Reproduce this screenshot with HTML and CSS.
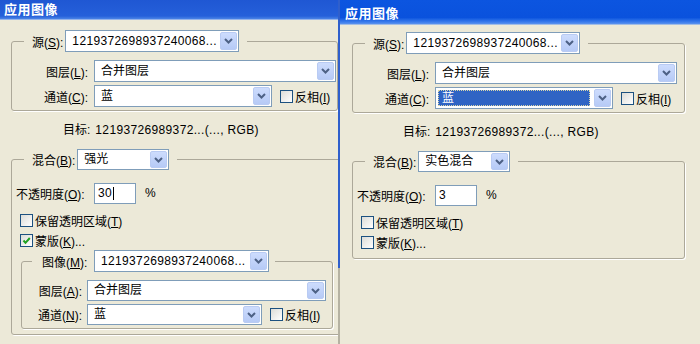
FILE: index.html
```html
<!DOCTYPE html>
<html lang="zh">
<head>
<meta charset="utf-8">
<title>应用图像</title>
<link rel="stylesheet" href="styles.css">
</head>
<body>
<div class="screen">
  <section class="dialog dlg-left">
    <header class="titlebar tb-left">应用图像</header>
    <fieldset class="group g1 gl">
      <legend class="legend"><div class="lg"><span class="lg-lbl">源(<u>S</u>):</span><div class="combo w174"><span class="val num">1219372698937240068...</span><span class="arrow"><svg viewBox="0 0 9 6"><path d="M1 1 L4.5 4.5 L8 1"/></svg></span></div></div></legend>
      <div class="row mt8"><span class="col">图层(<u>L</u>):</span><div class="combo w242"><span class="val">合并图层</span><span class="arrow"><svg viewBox="0 0 9 6"><path d="M1 1 L4.5 4.5 L8 1"/></svg></span></div></div>
      <div class="row mt3"><span class="col">通道(<u>C</u>):</span><div class="combo w178"><span class="val">蓝</span><span class="arrow"><svg viewBox="0 0 9 6"><path d="M1 1 L4.5 4.5 L8 1"/></svg></span></div><span class="check ml8"></span><span class="ctext">反相(<u>I</u>)</span></div>
    </fieldset>
    <div class="target"><span>目标:</span><span class="num tval">12193726989372...(..., RGB)</span></div>
    <fieldset class="group g2 gl2">
      <legend class="legend"><div class="lg"><span class="lg-lbl">混合(<u>B</u>):</span><div class="combo w92 h21"><span class="val">强光</span><span class="arrow"><svg viewBox="0 0 9 6"><path d="M1 1 L4.5 4.5 L8 1"/></svg></span></div></div></legend>
      <div class="row oprow"><span class="op-label">不透明度(<u>O</u>):</span><div class="input"><span class="num">30</span><span class="caret"></span></div><span class="pct">%</span></div>
      <div class="cbrow first"><span class="check"></span><span class="ctext">保留透明区域(<u>T</u>)</span></div>
      <div class="cbrow"><span class="check on"><svg viewBox="0 0 11 11"><path d="M2.5 5.5 L4.5 7.8 L8.8 3"/></svg></span><span class="ctext">蒙版(<u>K</u>)...</span></div>
      <fieldset class="group inner">
        <legend class="legend il"><div class="lg"><span class="lg-lbl w52">图像(<u>M</u>):</span><div class="combo w175"><span class="val num">1219372698937240068...</span><span class="arrow"><svg viewBox="0 0 9 6"><path d="M1 1 L4.5 4.5 L8 1"/></svg></span></div></div></legend>
        <div class="row mt8 h21r"><span class="col c60">图层(<u>A</u>):</span><div class="combo w239 h21"><span class="val">合并图层</span><span class="arrow"><svg viewBox="0 0 9 6"><path d="M1 1 L4.5 4.5 L8 1"/></svg></span></div></div>
        <div class="row mt3 h21r"><span class="col c60">通道(<u>N</u>):</span><div class="combo w175 h21"><span class="val">蓝</span><span class="arrow"><svg viewBox="0 0 9 6"><path d="M1 1 L4.5 4.5 L8 1"/></svg></span></div><span class="check ml8"></span><span class="ctext">反相(<u>I</u>)</span></div>
      </fieldset>
    </fieldset>
  </section>
  <div class="frame"></div>
  <section class="dialog dlg-right">
    <header class="titlebar tb-right">应用图像</header>
    <fieldset class="group g1 gr">
      <legend class="legend"><div class="lg"><span class="lg-lbl">源(<u>S</u>):</span><div class="combo w174"><span class="val num">1219372698937240068...</span><span class="arrow"><svg viewBox="0 0 9 6"><path d="M1 1 L4.5 4.5 L8 1"/></svg></span></div></div></legend>
      <div class="row mt8"><span class="col">图层(<u>L</u>):</span><div class="combo w242"><span class="val">合并图层</span><span class="arrow"><svg viewBox="0 0 9 6"><path d="M1 1 L4.5 4.5 L8 1"/></svg></span></div></div>
      <div class="row mt3"><span class="col">通道(<u>C</u>):</span><div class="combo w178 sel"><span class="val">蓝</span><span class="arrow"><svg viewBox="0 0 9 6"><path d="M1 1 L4.5 4.5 L8 1"/></svg></span></div><span class="check ml8"></span><span class="ctext">反相(<u>I</u>)</span></div>
    </fieldset>
    <div class="target"><span>目标:</span><span class="num tval">12193726989372...(..., RGB)</span></div>
    <fieldset class="group g2 gr2">
      <legend class="legend"><div class="lg"><span class="lg-lbl">混合(<u>B</u>):</span><div class="combo w92 h21"><span class="val">实色混合</span><span class="arrow"><svg viewBox="0 0 9 6"><path d="M1 1 L4.5 4.5 L8 1"/></svg></span></div></div></legend>
      <div class="row oprow"><span class="op-label">不透明度(<u>O</u>):</span><div class="input"><span class="num">3</span></div><span class="pct">%</span></div>
      <div class="cbrow first"><span class="check"></span><span class="ctext">保留透明区域(<u>T</u>)</span></div>
      <div class="cbrow"><span class="check"></span><span class="ctext">蒙版(<u>K</u>)...</span></div>
    </fieldset>
  </section>
</div>
</body>
</html>
```
FILE: styles.css
```css
* { box-sizing: border-box; }
html, body { margin: 0; padding: 0; }
body {
  width: 700px;
  height: 344px;
  overflow: hidden;
  background: #ece9d8;
  font-family: "Liberation Sans", "Noto Sans CJK SC", sans-serif;
  font-size: 12px;
  color: #000;
}
u { text-decoration: underline; text-underline-offset: 1px; }
.screen { display: flex; height: 344px; }
.dialog { background: #ece9d8; height: 344px; overflow: hidden; }
.dlg-left { width: 338px; flex: none; }
.frame { width: 2px; flex: none; background: linear-gradient(#2f5fcc 0, #2f5fcc 268px, #b5b2a2 268px); }
.dlg-right { flex: 1; min-width: 0; }

.titlebar {
  color: #fff;
  font-family: "Noto Sans CJK SC", sans-serif;
  font-weight: bold;
  font-size: 13px;
  line-height: 15px;
  letter-spacing: 0.5px;
}
.tb-left {
  height: 20px;
  padding: 1px 0 0 4px;
  background: linear-gradient(#1f57d3, #2560da 80%, #4b84e6 95%, #dfe3ee 100%);
}
.tb-right {
  height: 25px;
  padding: 5px 0 0 5px;
  background: linear-gradient(#0c55e0, #0a52dd 70%, #3a7cec 88%, #5b93ee 96%, #e7e6dc 100%);
}

.group {
  margin: 0;
  padding: 0;
  min-width: 0;
  border: 1px solid #aca899;
  border-radius: 3px;
  box-shadow: 1px 1px 0 #fff;
}
.legend {
  margin-left: 12px;
  padding: 0 8px;
  background: #ece9d8;
}
.lg { display: flex; align-items: center; }
.lg-lbl { margin-right: 2px; white-space: nowrap; }
.lg-lbl.w52 { width: 52px; margin-right: 0; }

.gl { margin: 10px 0 0 11px; width: 327px; padding-bottom: 3px; }
.gr { margin: 7px 0 0 12px; width: 333px; padding-bottom: 3px; }
.gl2 { margin: 12px 0 0 11px; width: 345px; padding-bottom: 5px; }
.gr2 { margin: 12px 0 0 12px; width: 333px; padding-bottom: 6px; }
.inner { margin: 0 0 0 9px; width: 312px; padding-bottom: 3px; }
.il { margin-left: 10px; padding: 0 6px 0 10px; }

.row { display: flex; align-items: center; height: 22px; white-space: nowrap; }
.h21r { height: 21px; }
.mt8 { margin-top: 8px; }
.mt3 { margin-top: 3px; }
.ml8 { margin-left: 8px; }
.col { width: 76px; margin-right: 6px; text-align: right; }
.col.c60 { width: 60px; margin-right: 5px; }

.combo {
  display: flex;
  height: 22px;
  border: 1px solid #7f9db9;
  background: #fff;
  flex: none;
}
.combo.h21 { height: 21px; }
.w92 { width: 92px; }
.w174 { width: 174px; }
.w175 { width: 175px; }
.w178 { width: 178px; }
.w239 { width: 239px; }
.w242 { width: 242px; }
.val {
  flex: 1;
  min-width: 0;
  padding-left: 6px;
  line-height: 20px;
  white-space: nowrap;
  overflow: hidden;
}
.h21 .val { line-height: 19px; }
.sel .val {
  margin: 2px 3px 2px 2px;
  padding-left: 4px;
  line-height: 16px;
  background: #2f64c4;
  color: #fff;
  outline: 1px dotted #d8d6a8;
  outline-offset: -1px;
}
.arrow {
  width: 17px;
  margin: 1px;
  flex: none;
  display: flex;
  align-items: center;
  justify-content: center;
  border: 1px solid #b9cbf3;
  border-radius: 2px;
  background: linear-gradient(#cddcfd, #b6caf6);
}
.arrow svg { width: 9px; height: 6px; fill: none; stroke: #4d6185; stroke-width: 2; }

.num { letter-spacing: 0.35px; }

.check {
  width: 13px;
  height: 13px;
  flex: none;
  border: 1px solid #1c5180;
  background: linear-gradient(135deg, #dcdcd7, #fff);
  display: flex;
}
.check svg { width: 11px; height: 11px; fill: none; stroke: #21a121; stroke-width: 2; }
.ctext { margin-left: 2px; }

.target {
  margin-top: 12px;
  padding-left: 63px;
  line-height: 14px;
  white-space: nowrap;
}
.tval { margin-left: 5px; }

.oprow { margin-top: 12px; padding-left: 4px; }
.op-label { width: 78px; }
.input {
  width: 42px;
  height: 21px;
  border: 1px solid #7f9db9;
  background: #fff;
  display: flex;
  align-items: center;
  padding-left: 3px;
}
.caret { width: 1px; height: 13px; background: #000; margin-left: 1px; }
.pct { margin-left: 9px; }

.cbrow {
  display: flex;
  align-items: center;
  height: 20px;
  padding-left: 8px;
  white-space: nowrap;
}
.cbrow.first { margin-top: 6px; }
```
